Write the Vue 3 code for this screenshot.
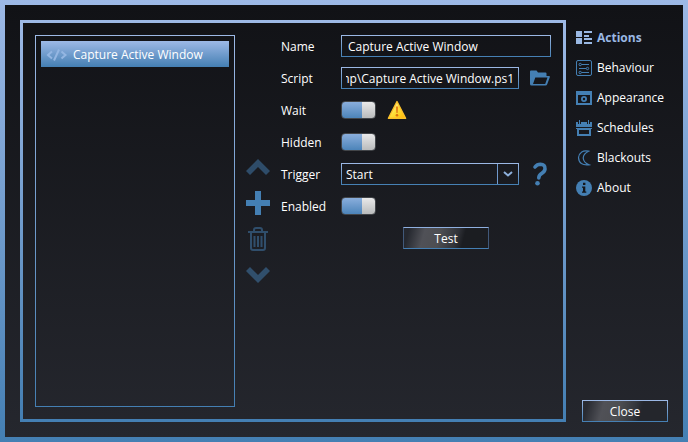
<script setup>
import { ref, onMounted } from 'vue'

const name = ref('Capture Active Window')
const script = ref('C:\\Temp\\Capture Active Window.ps1')
const wait = ref(true)
const hidden = ref(true)
const trigger = ref('Start')
const enabled = ref(true)
const scriptInput = ref(null)

const tabs = ['Actions', 'Behaviour', 'Appearance', 'Schedules', 'Blackouts', 'About']
const active = ref('Actions')

// Keep the file name, not the drive, in view
onMounted(() => {
  scriptInput.value.scrollLeft = scriptInput.value.scrollWidth
})
</script>

<template>
  <div class="window">
    <div class="content">
      <main class="panel">
        <ul class="list">
          <li class="item">
            <svg width="22" height="14" viewBox="0 0 22 14" fill="none" stroke="#94b6e2" stroke-width="2">
              <path d="M6 3.500 2 7l4 3.500M15.500 3.500 19.500 7l-4 3.500M13 1.500 8 12.500" />
            </svg>
            <span>Capture Active Window</span>
          </li>
        </ul>

        <div class="tools">
          <button class="icon dim" aria-label="Move up">
            <svg width="24" height="24" viewBox="0 0 24 24" fill="#447fb3"><path d="M12 4 24 16l-4 4-8-8-8 8-4-4Z" /></svg>
          </button>
          <button class="icon" aria-label="Add">
            <svg width="24" height="24" viewBox="0 0 24 24" fill="#447fb3"><path d="M9 0h6v9h9v6h-9v9H9v-9H0V9h9Z" /></svg>
          </button>
          <button class="icon dim" aria-label="Delete">
            <svg width="24" height="24" viewBox="0 0 24 24" fill="none" stroke="#447fb3" stroke-width="2">
              <path d="M2 5h20M5 6v15q0 2 2 2h10q2 0 2-2V6M8 5V3q0-2 2-2h4q2 0 2 2v2" />
              <path d="M8.500 9v11M12 9v11M15.500 9v11" />
            </svg>
          </button>
          <button class="icon dim" aria-label="Move down">
            <svg width="24" height="24" viewBox="0 0 24 24" fill="#447fb3"><path d="M12 20 24 8l-4-4-8 8-8-8-4 4Z" /></svg>
          </button>
        </div>

        <form class="form" @submit.prevent>
          <label for="name">Name</label>
          <input id="name" v-model="name" class="box wide" type="text" />

          <label for="script">Script</label>
          <input id="script" ref="scriptInput" v-model="script" class="box" type="text" />
          <button class="icon side" type="button" aria-label="Browse">
            <svg width="21" height="16" viewBox="0 0 21 16">
              <path fill="#447fb3" fill-rule="evenodd" d="M0 1.500Q0 .5 1 .5h5.500l1.500 2h7.500q1 0 1 1V6h2.500q1.300 0 .8 1.200l-2.600 7q-.4 1.300-1.700 1.300H1.500Q0 15.500 0 14ZM5.300 7.600 3 13.900h12.200l2.300-6.300Z" />
            </svg>
          </button>

          <label for="wait">Wait</label>
          <div class="pair">
            <input id="wait" v-model="wait" class="toggle" type="checkbox" />
            <svg width="20" height="20" viewBox="0 0 20 20">
              <defs>
                <linearGradient id="warn" x1="0" y1="0" x2="1" y2="1">
                  <stop offset="0" stop-color="#fffbd8" />
                  <stop offset=".5" stop-color="#ffe03a" />
                  <stop offset="1" stop-color="#ffb400" />
                </linearGradient>
              </defs>
              <path d="M10 1.500 18.600 18.300H1.400Z" fill="url(#warn)" stroke="#fbc02a" stroke-width="1.400" stroke-linejoin="round" />
              <path d="M8.800 6.500h2.400l-.5 6.500H9.300Z" fill="#e5841a" />
              <circle cx="10" cy="15.200" r="1.300" fill="#dc7310" />
            </svg>
          </div>

          <label for="hidden">Hidden</label>
          <div class="pair"><input id="hidden" v-model="hidden" class="toggle" type="checkbox" /></div>

          <label for="trigger">Trigger</label>
          <div class="combo">
            <select id="trigger" v-model="trigger" class="box">
              <option>Start</option>
              <option>Stop</option>
            </select>
            <span class="drop">
              <svg width="10" height="8" viewBox="0 0 10 8" fill="none" stroke="#8db0dc" stroke-width="2"><path d="M1 2l4 3.500L9 2" /></svg>
            </span>
          </div>
          <button class="icon side" type="button" aria-label="Help">
            <svg width="21" height="24" viewBox="0 0 21 24">
              <path d="M5 5Q7 2.300 10.500 2.300 15.300 2.500 15 7q-.3 2.700-3.200 4.300Q8.800 13 8.800 16" fill="none" stroke="#447fb3" stroke-width="3.600" stroke-linecap="round" />
              <circle cx="7.500" cy="21.300" r="2.300" fill="#447fb3" />
            </svg>
          </button>

          <label for="enabled">Enabled</label>
          <div class="pair"><input id="enabled" v-model="enabled" class="toggle" type="checkbox" /></div>

          <div class="submit"><button class="button test" type="button">Test</button></div>
        </form>
      </main>

      <aside class="side-bar">
        <nav class="nav">
          <button v-for="tab in tabs" :key="tab" class="tab" :class="{ active: tab === active }" @click="active = tab">
            <svg v-if="tab === 'Actions'" width="17" height="16" viewBox="0 0 17 16" fill="#9ab8e3">
              <path d="M0 1h6v6H0zM0 8h6v6H0zM8 1h8v2H8zM8 5h5v2H8zM8 8h8v2H8zM8 12h8v2H8z" />
            </svg>
            <svg v-else-if="tab === 'Behaviour'" width="17" height="16" viewBox="0 0 17 16" fill="none" stroke="#447fb3">
              <rect x=".5" y=".5" width="15" height="15" rx="1.500" />
              <path d="M5.500 4.500H13M3 8.500h7M5.500 12.500H13" />
              <circle cx="4.200" cy="4.500" r="1.200" /><circle cx="11.500" cy="8.500" r="1.200" /><circle cx="4.200" cy="12.500" r="1.200" />
            </svg>
            <svg v-else-if="tab === 'Appearance'" width="17" height="16" viewBox="0 0 17 16" fill="#447fb3">
              <path fill-rule="evenodd" d="M0 1h16v14H0zM2 5v8h12V5z" />
              <circle cx="8" cy="9" r="2.100" fill="none" stroke="#447fb3" stroke-width="1.800" />
            </svg>
            <svg v-else-if="tab === 'Schedules'" width="17" height="16" viewBox="0 0 17 16" fill="#447fb3">
              <path d="M0 2h2v2h3V2h6v2h3V2h2v5H0zM3 0h1v4H3zM12 0h1v4h-1z" />
              <path fill-rule="evenodd" d="M0 8h16v1h-1v7H1V9H0zM3 10v4h10v-4z" />
            </svg>
            <svg v-else-if="tab === 'Blackouts'" width="17" height="16" viewBox="0 0 17 16" fill="none" stroke="#447fb3" stroke-width="1.200">
              <path d="M12.500 1.200Q4 -.5 2.500 7.500 3 16 13 14.800 7.500 12.500 7.200 8 7.500 3.500 12.500 1.200Z" />
            </svg>
            <svg v-else width="17" height="16" viewBox="0 0 17 16">
              <circle cx="8" cy="8" r="8" fill="#447fb3" />
              <path d="M7 2.800h2.400v2.200H7zM6 6.500h3.300v5h1v1.300H6v-1.300h1V7.800H6z" fill="#15171b" />
            </svg>
            <span>{{ tab }}</span>
          </button>
        </nav>
        <button class="button close">Close</button>
      </aside>
    </div>
  </div>
</template>

<style>
body {
  margin: 0;
}
</style>

<style scoped>
* {
  box-sizing: border-box;
}

.window {
  --light: #9db9e6;
  --dark: #447fb3;
  --edge: linear-gradient(var(--light), var(--dark));
  display: flex;
  min-height: 100vh;
  padding: 5px;
  background: var(--edge);
  color: #fff;
  font: 12px/16px "Open Sans", "Noto Sans", sans-serif;
}

.content {
  flex: 1;
  display: grid;
  grid-template-columns: 1fr 92px;
  gap: 10px;
  padding: 15px;
  background: linear-gradient(#111216, #25272e);
}

.panel {
  display: grid;
  grid-template-columns: 200px 24px 1fr;
  gap: 11px;
  padding: 12px;
  border: 3px solid;
  border-image: var(--edge) 1;
}

.list {
  margin: 0;
  padding: 5px;
  border: 1px solid;
  border-image: var(--edge) 1;
  list-style: none;
}

.item {
  display: flex;
  align-items: center;
  gap: 5px;
  height: 26px;
  padding: 2px 5px 0;
  background: linear-gradient(#9db9e6, #447fb3);
}

.tools {
  display: flex;
  flex-direction: column;
  justify-content: center;
  gap: 12px;
}

button {
  padding: 0;
  border: 0;
  background: none;
  color: inherit;
  font: inherit;
}

svg {
  display: block;
  flex: none;
}

.dim {
  opacity: 0.5;
}

.form {
  display: grid;
  grid-template-columns: 60px 1fr 32px;
  grid-auto-rows: 22px;
  align-content: start;
  align-items: center;
  row-gap: 10px;
}

label {
  padding-top: 2px;
}

.box {
  width: 100%;
  height: 22px;
  min-width: 0;
  margin: 0;
  padding: 0 4px;
  border: 1px solid;
  border-image: var(--edge) 1;
  border-radius: 0;
  outline: 0;
  background: transparent;
  color: inherit;
  font: inherit;
  appearance: none;
}

.wide {
  grid-column: 2 / 4;
  padding: 0 6px;
}

.side {
  display: flex;
  justify-content: flex-end;
}

.pair {
  grid-column: 2 / 4;
  display: flex;
  align-items: center;
  gap: 11px;
}

.toggle {
  width: 35px;
  height: 18px;
  margin: 0;
  border: 1px solid #424549;
  border-radius: 4px;
  appearance: none;
  background: linear-gradient(#e9e9ea, #b9bbbc) left / 13px 100% no-repeat, #33363b;
}

.toggle:checked {
  background: linear-gradient(#e9e9ea, #b9bbbc) right / 13px 100% no-repeat, linear-gradient(#8aaedc, #4c84b9);
}

.combo {
  position: relative;
}

.combo .box {
  display: block;
  padding-top: 1px;
}

.combo option {
  background: #1a1b20;
}

.drop {
  position: absolute;
  top: 1px;
  right: 1px;
  bottom: 1px;
  display: grid;
  place-items: center;
  width: 21px;
  border-left: 1px solid #7099cc;
  pointer-events: none;
}

.submit {
  grid-column: 2 / 4;
  display: flex;
  justify-content: center;
}

.button {
  width: 86px;
  height: 22px;
  padding-top: 2px;
  border: 1px solid;
  border-image: var(--edge) 1;
  background: linear-gradient(105deg, #25282f 6%, #505157 24%, #4d4e52 42%, #303238 62%, #1b1d21 70%);
}

.test {
  border-color: #8fb0e0 #41597a #447fb3;
  border-image: none;
}

.side-bar {
  display: flex;
  flex-direction: column;
  justify-content: space-between;
}

.nav {
  display: grid;
  gap: 10px;
  padding-top: 8px;
}

.tab {
  display: flex;
  align-items: center;
  gap: 4px;
  height: 20px;
}

.tab.active {
  color: #9ab8e3;
  font-weight: 700;
}

.close {
  align-self: flex-end;
  background: linear-gradient(105deg, #292b32 6%, #505157 24%, #4d4e52 42%, #34363c 60%, #24262c 68%);
}
</style>
